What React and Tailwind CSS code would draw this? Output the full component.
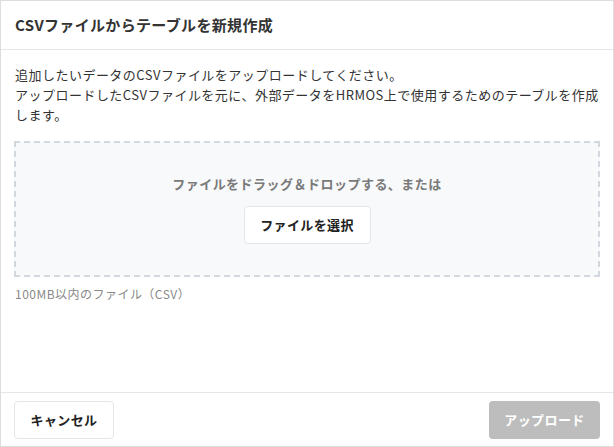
export default function App() {
  return (
    <div
      className="w-[614px] h-[447px] bg-white border border-[#dddddd] flex flex-col text-[#333333] tracking-[0.03em]"
      style={{ fontFamily: '"Noto Sans CJK JP", "Noto Sans", sans-serif' }}
    >
      <div className="h-[49px] shrink-0 flex items-center px-[14px] border-b border-[#e3e6ea]">
        <h1 className="text-[15px] font-bold leading-5 tracking-[0.022em]">CSVファイルからテーブルを新規作成</h1>
      </div>
      <div className="flex-1 px-[13px] pt-[15px]">
        <p className="text-[13px] leading-5 pl-[1px]">
          追加したいデータのCSVファイルをアップロードしてください。
          <br />
          アップロードしたCSVファイルを元に、外部データをHRMOS上で使用するためのテーブルを作成します。
        </p>
        <div className="mt-4 border-2 border-dashed border-[#d3d8de] bg-[#f8f9fa] flex flex-col items-center py-[31px] gap-3">
          <div className="text-[13px] font-bold leading-5 text-[#7a7a7a]">
            ファイルをドラッグ＆ドロップする、または
          </div>
          <button className="h-[38px] w-[127px] bg-white border border-[#e3e6ea] rounded-[4px] text-[13px] font-bold text-[#222222] tracking-[0.03em]">
            ファイルを選択
          </button>
        </div>
        <div className="mt-[8px] text-[12px] leading-[18px] text-[#888888] pl-[1px]">
          100MB以内のファイル（CSV）
        </div>
      </div>
      <div className="shrink-0 border-t border-[#e3e6ea] px-[13px] pt-2 pb-[7px] flex justify-between">
        <button className="h-[38px] w-[100px] bg-white border border-[#e3e6ea] rounded-[4px] text-[13px] font-bold text-[#222222] tracking-[0.03em]">
          キャンセル
        </button>
        <button className="h-[38px] w-[111px] bg-[#bdbdbd] rounded-[4px] text-[13px] font-bold text-white tracking-[0.03em]">
          アップロード
        </button>
      </div>
    </div>
  );
}
